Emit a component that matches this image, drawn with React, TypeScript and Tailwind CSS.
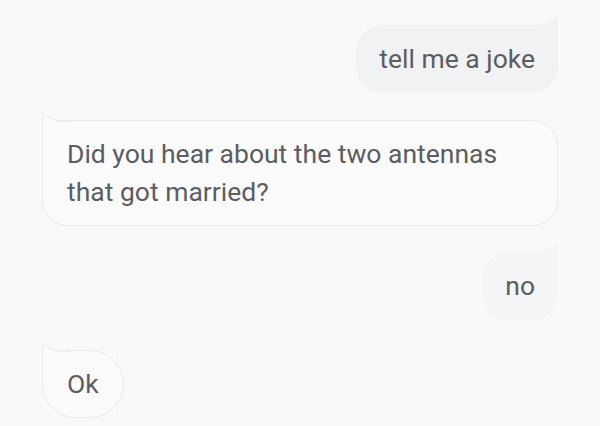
import React from 'react'

type Msg = { from: 'user' | 'bot'; text: React.ReactNode; faint?: boolean; wide?: boolean; round?: boolean }

const messages: Msg[] = [
  { from: 'user', text: 'tell me a joke' },
  {
    from: 'bot',
    wide: true,
    text: (
      <>
        Did you hear about the two antennas
        <br />
        that got married?
      </>
    ),
  },
  { from: 'user', text: 'no', faint: true },
  { from: 'bot', text: 'Ok', round: true },
]

function UserBubble({ children, faint }: { children: React.ReactNode; faint?: boolean }) {
  const fill = faint ? '#f4f5f6' : '#f1f2f4'
  return (
    <div
      className={`relative self-end rounded-[26px] rounded-tr-none px-[23px] py-[15px] ${faint ? 'bg-[#f4f5f6]' : 'bg-[#f1f2f4]'}`}
    >
      {/* tail, top right */}
      <svg className="absolute -top-[12px] right-0" width="26" height="40" viewBox="0 0 26 40">
        <path d="M0 12 Q20 12 26 0 L26 40 L0 40 Z" fill={fill} />
      </svg>
      <span className="relative">{children}</span>
    </div>
  )
}

function BotBubble({ children, wide, round }: { children: React.ReactNode; wide?: boolean; round?: boolean }) {
  return (
    <div
      className={`relative rounded-tl-none border border-[#e9eaec] bg-[#fbfbfc] px-[24px] py-[14px] ${wide ? 'self-stretch' : 'self-start'} ${round ? 'rounded-[36px]' : 'rounded-[26px]'}`}
    >
      {/* tail, top left */}
      <svg className="absolute -top-[9px] -left-px" width="28" height="40" viewBox="0 0 28 40">
        <path d="M28 9.5 Q6 9.5 0.5 0.5 L0.5 40 L28 40 Z" fill="#fbfbfc" />
        <path d="M28 9.5 Q6 9.5 0.5 0.5 L0.5 40" fill="none" stroke="#e9eaec" strokeWidth="1" />
      </svg>
      <span className="relative">{children}</span>
    </div>
  )
}

export default function App() {
  return (
    <div
      className="flex h-[426px] w-[600px] flex-col overflow-hidden bg-[#f9f9fa] px-[42px] pt-[25px] text-[26.5px] leading-[38px] text-[#5b5d61]"
      style={{ fontFamily: 'Roboto, "Liberation Sans", sans-serif' }}
    >
      <UserBubble>{messages[0].text}</UserBubble>
      <div className="mt-[27px] flex flex-col">
        <BotBubble wide>{messages[1].text}</BotBubble>
      </div>
      <div className="mt-[26px] flex flex-col">
        <UserBubble faint>{messages[2].text}</UserBubble>
      </div>
      <div className="mt-[30px] flex flex-col">
        <BotBubble round>{messages[3].text}</BotBubble>
      </div>
    </div>
  )
}
